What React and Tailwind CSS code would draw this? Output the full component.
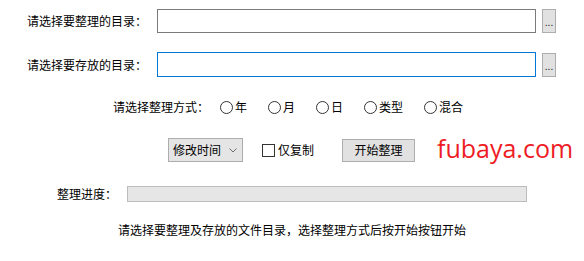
import React from "react";

const cjk = { fontFamily: '"Noto Sans CJK SC", "Microsoft YaHei", sans-serif' };

function Radio({ label, className = "" }) {
  return (
    <div className={`flex items-center ${className}`}>
      <span className="box-border h-[13px] w-[13px] rounded-full border border-[#333] bg-white" />
      <span className="ml-[2px]">{label}</span>
    </div>
  );
}

function Browse() {
  return (
    <button type="button" className="ml-[6px] box-border flex h-[24px] w-[14px] items-end justify-center border border-[#adadad] bg-[#e1e1e1] pb-[5px] text-[10px] leading-none text-[#222]">
      ...
    </button>
  );
}

export default function App() {
  return (
    <div className="flex h-[261px] w-[584px] flex-col bg-white text-[12px] leading-none text-black" style={cjk}>
      <div className="mt-[9px] flex h-[24px] items-center">
        <span className="ml-[27px] w-[130px]">请选择要整理的目录：</span>
        <div className="box-border h-[24px] w-[379px] border border-[#7a7a7a] bg-white" />
        <Browse />
      </div>

      <div className="mt-[19px] flex h-[25px] items-center">
        <span className="ml-[27px] w-[130px]">请选择要存放的目录：</span>
        <div className="box-border h-[25px] w-[379px] border border-[#0078d7] bg-white" />
        <Browse />
      </div>

      <div className="mt-[20px] flex h-[20px] items-center">
        <span className="ml-[113px] w-[107px]">请选择整理方式：</span>
        <Radio label="年" className="w-[48px]" />
        <Radio label="月" className="w-[48px]" />
        <Radio label="日" className="w-[48px]" />
        <Radio label="类型" className="w-[60px]" />
        <Radio label="混合" />
      </div>

      <div className="mt-[21px] flex h-[24px] items-center">
        <div className="ml-[168px] box-border flex h-[24px] w-[75px] items-center justify-between border border-[#adadad] bg-[#e5e5e5] pl-[4px] pr-[5px]">
          <span>修改时间</span>
          <svg width="8" height="5" viewBox="0 0 8 5" fill="none">
            <path d="M0.5 0.5 L4 4 L7.5 0.5" stroke="#707070" strokeWidth="1" />
          </svg>
        </div>
        <span className="ml-[19px] box-border h-[13px] w-[13px] border border-[#333] bg-white" />
        <span className="ml-[3px]">仅复制</span>
        <button type="button" className="ml-[28px] box-border h-[23px] w-[73px] border border-[#adadad] bg-[#e1e1e1] text-[12px]" style={cjk}>
          开始整理
        </button>
        <span className="ml-[22px] -mt-[4px] text-[25px] leading-none text-[#ee1c25]" style={{ fontFamily: '"Open Sans", "Noto Sans", sans-serif' }}>
          fubaya.com
        </span>
      </div>

      <div className="mt-[24px] flex h-[16px] items-center">
        <span className="ml-[57px] w-[70px]">整理进度：</span>
        <div className="box-border h-[16px] w-[400px] border border-[#bcbcbc] bg-[#e6e6e6]" />
      </div>

      <div className="mt-[20px] flex h-[16px] items-center">
        <span className="ml-[118px]">请选择要整理及存放的文件目录，选择整理方式后按开始按钮开始</span>
      </div>
    </div>
  );
}
